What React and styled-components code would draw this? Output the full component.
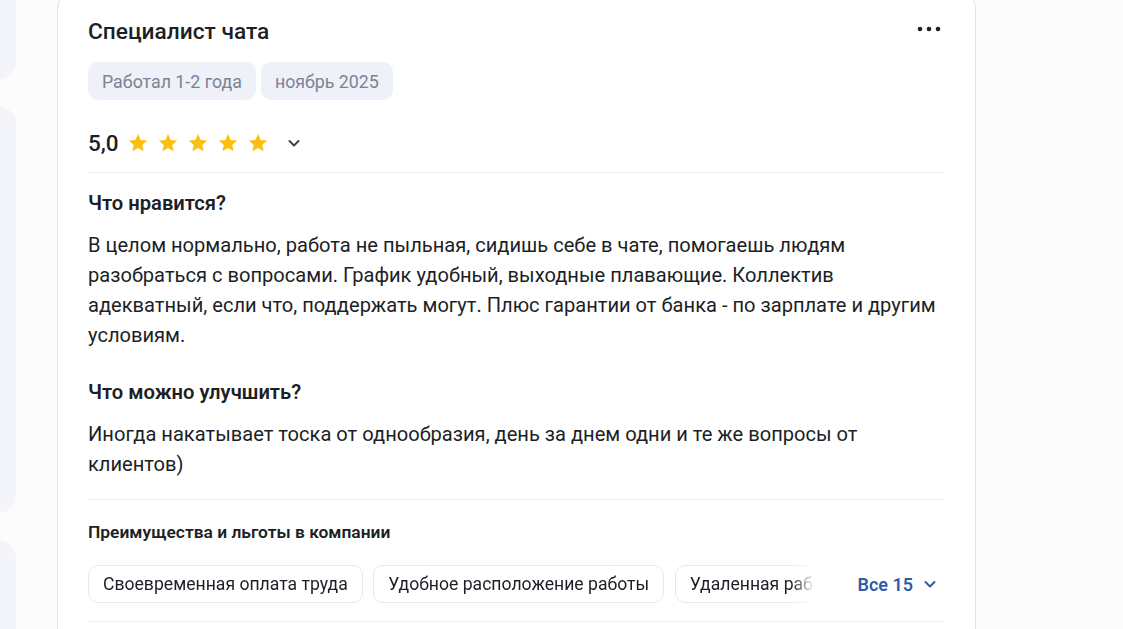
import React from 'react'
import styled, { createGlobalStyle } from 'styled-components'

const GlobalStyle = createGlobalStyle`
  html, body {
    margin: 0;
    padding: 0;
    height: 629px;
    overflow: hidden;
    background: #fcfcfd;
    font-family: Roboto, "Liberation Sans", sans-serif;
    color: #1c1f26;
  }
`

const Page = styled.div`
  display: flex;
  gap: 41px;
  align-items: flex-start;
`

const SideColumn = styled.div`
  width: 316px;
  margin-left: -300px;
  margin-top: -40px;
  display: flex;
  flex-direction: column;
  gap: 27px;
`

const SideCard = styled.div`
  height: ${p => p.h}px;
  background: #f4f5fa;
  border-radius: 18px;
`

const Card = styled.div`
  width: 857px;
  margin-top: -12px;
  padding: 29px 30px 40px;
  background: #fff;
  border: 1px solid #dfe3ec;
  border-radius: 22px;
`

const Header = styled.div`
  display: flex;
  justify-content: space-between;
  align-items: center;
`

const Title = styled.h2`
  margin: 0;
  font-size: 22.7px;
  line-height: 28px;
  font-weight: 500;
`

const MoreButton = styled.button`
  border: 0;
  background: none;
  padding: 0;
  margin: 0 4px 6px 0;
  display: flex;
  align-items: center;
  cursor: pointer;
`

const Tags = styled.div`
  display: flex;
  gap: 5px;
  margin-top: 16px;
`

const Tag = styled.span`
  height: 38px;
  padding: 0 14px;
  display: inline-flex;
  align-items: center;
  border-radius: 10px;
  background: #eef1f7;
  color: #7a8396;
  font-size: 17.8px;
`

const RatingRow = styled.div`
  display: flex;
  align-items: center;
  height: 30px;
  margin-top: 28px;
`

const Score = styled.span`
  font-size: 22.5px;
  font-weight: 500;
  margin-right: 8px;
`

const Stars = styled.div`
  display: flex;
  gap: 8px;
`

const Chevron = styled.svg`
  margin-left: ${p => p.$ml || 0}px;
  flex-shrink: 0;
`

const Divider = styled.hr`
  margin: ${p => p.$mt}px 0 0;
  border: 0;
  border-top: 1px solid #eef0f5;
`

const Question = styled.h3`
  margin: ${p => p.$mt}px 0 0;
  font-size: 20.2px;
  line-height: 24px;
  font-weight: 600;
`

const Answer = styled.p`
  margin: 15px 0 0;
  font-size: 20.1px;
  line-height: 30px;
`

const BenefitsTitle = styled.h4`
  margin: 21px 0 0;
  font-size: 17.4px;
  line-height: 22px;
  font-weight: 600;
`

const BenefitsRow = styled.div`
  display: flex;
  align-items: center;
  margin-top: 22px;
`

const ChipTrack = styled.div`
  flex: 1;
  display: flex;
  gap: 10.5px;
  overflow: hidden;
  -webkit-mask-image: linear-gradient(to right, #000 calc(100% - 48px), transparent calc(100% - 24px));
  mask-image: linear-gradient(to right, #000 calc(100% - 48px), transparent calc(100% - 24px));
`

const Chip = styled.span`
  flex-shrink: 0;
  height: 38px;
  padding: 0 14px;
  display: inline-flex;
  align-items: center;
  border: 1px solid #e7e9f0;
  border-radius: 10px;
  box-sizing: border-box;
  font-size: 17.6px;
  background: #fff;
`

const AllButton = styled.button`
  border: 0;
  background: none;
  padding: 0;
  margin: 0 8px 0 18px;
  display: flex;
  align-items: center;
  gap: 10px;
  color: #2f5ca6;
  font-family: inherit;
  font-size: 18px;
  font-weight: 600;
  cursor: pointer;
`

const Star = () => (
  <svg width="22" height="22" viewBox="0 0 24 24">
    <path
      fill="#fdc010"
      d="M12 2.2l2.9 6.6 7.1.6-5.4 4.7 1.6 7L12 17.4l-6.2 3.7 1.6-7L2 9.4l7.1-.6z"
    />
  </svg>
)

const ChevronDown = ({ color = '#444', ml }) => (
  <Chevron $ml={ml} width="14" height="14" viewBox="0 0 14 14">
    <path d="M2.5 5l4.5 4.5L11.5 5" fill="none" stroke={color} strokeWidth="2" strokeLinecap="round" strokeLinejoin="round" />
  </Chevron>
)

const benefits = [
  'Своевременная оплата труда',
  'Удобное расположение работы',
  'Удаленная работа',
  'ДМС',
]

export default function App() {
  return (
    <>
      <GlobalStyle />
      <Page>
        <SideColumn>
          <SideCard h={119} />
          <SideCard h={407} />
          <SideCard h={200} />
        </SideColumn>
        <Card>
          <Header>
            <Title>Специалист чата</Title>
            <MoreButton aria-label="Ещё">
              <svg width="24" height="6" viewBox="0 0 24 6">
                <circle cx="3" cy="3" r="2.3" fill="#1c1f26" />
                <circle cx="12" cy="3" r="2.3" fill="#1c1f26" />
                <circle cx="21" cy="3" r="2.3" fill="#1c1f26" />
              </svg>
            </MoreButton>
          </Header>
          <Tags>
            <Tag>Работал 1-2 года</Tag>
            <Tag>ноябрь 2025</Tag>
          </Tags>
          <RatingRow>
            <Score>5,0</Score>
            <Stars>
              {[0, 1, 2, 3, 4].map(i => <Star key={i} />)}
            </Stars>
            <ChevronDown ml={18} />
          </RatingRow>
          <Divider $mt={14} />
          <Question $mt={18}>Что нравится?</Question>
          <Answer>
            В целом нормально, работа не пыльная, сидишь себе в чате, помогаешь людям
            разобраться с вопросами. График удобный, выходные плавающие. Коллектив
            адекватный, если что, поддержать могут. Плюс гарантии от банка - по зарплате и другим
            условиям.
          </Answer>
          <Question $mt={30}>Что можно улучшить?</Question>
          <Answer>
            Иногда накатывает тоска от однообразия, день за днем одни и те же вопросы от
            клиентов)
          </Answer>
          <Divider $mt={20} />
          <BenefitsTitle>Преимущества и льготы в компании</BenefitsTitle>
          <BenefitsRow>
            <ChipTrack>
              {benefits.map(b => <Chip key={b}>{b}</Chip>)}
            </ChipTrack>
            <AllButton>
              Все 15
              <ChevronDown color="#2f5ca6" />
            </AllButton>
          </BenefitsRow>
          <Divider $mt={18} />
        </Card>
      </Page>
    </>
  )
}
